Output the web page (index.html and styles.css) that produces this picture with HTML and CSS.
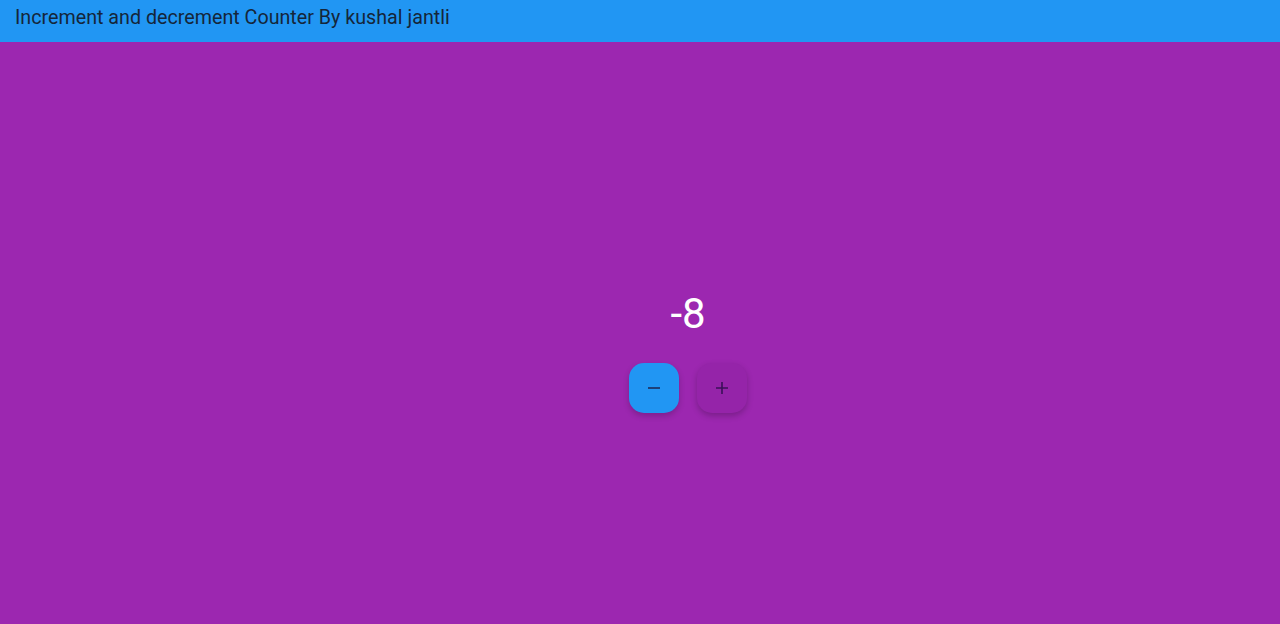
FILE: index.html
```html
<!DOCTYPE html>
<html>
<head>
<meta charset="utf-8">
<link rel="stylesheet" href="styles.css">
</head>
<body>
<header class="appbar">Increment and decrement Counter By kushal jantli</header>
<main class="content">
  <div class="counter">
    <div class="value">-8</div>
    <div class="buttons">
      <button class="btn btn-minus" aria-label="decrement">
        <svg width="14" height="14" viewBox="0 0 14 14"><path d="M1 7h12" stroke="#1d2b5a" stroke-width="1.6"/></svg>
      </button>
      <button class="btn btn-plus" aria-label="increment">
        <svg width="14" height="14" viewBox="0 0 14 14"><path d="M1 7h12M7 1v12" stroke="#3a1058" stroke-width="1.6"/></svg>
      </button>
    </div>
  </div>
</main>
</body>
</html>
```
FILE: styles.css
```css
html, body {
  margin: 0;
  padding: 0;
  height: 100%;
}
body {
  background: #9c27b0;
  font-family: Roboto, "Noto Sans", sans-serif;
  display: flex;
  flex-direction: column;
}
.appbar {
  background: #2196f3;
  height: 42px;
  box-sizing: border-box;
  padding: 6px 15px 0;
  font-size: 19.7px;
  line-height: 24px;
  color: #15263a;
  flex: none;
}
.content {
  flex: 1;
  display: flex;
  justify-content: center;
  padding-left: 96px;
  padding-top: 247px;
}
.counter {
  display: flex;
  flex-direction: column;
  align-items: center;
  gap: 25px;
}
.value {
  color: #fff;
  font-size: 42px;
  line-height: 49px;
}
.buttons {
  display: flex;
  gap: 18px;
}
.btn {
  width: 50px;
  height: 50px;
  border: none;
  border-radius: 15px;
  display: flex;
  align-items: center;
  justify-content: center;
  padding: 0;
}
.btn-minus {
  background: #2196f3;
  box-shadow: 0 3px 6px rgba(0,0,0,0.2);
}
.btn-plus {
  background: #9524a9;
  box-shadow: 0 3px 6px rgba(0,0,0,0.22);
}
```
